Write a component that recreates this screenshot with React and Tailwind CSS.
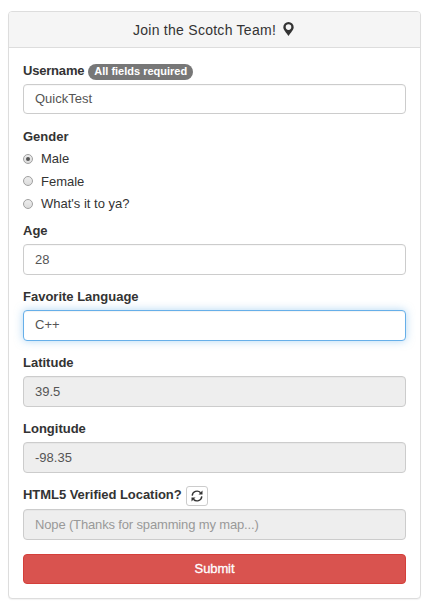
const INPUT =
  'flex w-full items-center rounded-[4px] border px-[11px] text-[13px] leading-none';

function Label({ children, className = 'h-[27px]' }) {
  return (
    <div className={`flex items-center text-[13px] font-bold leading-none text-[#333] ${className}`}>
      {children}
    </div>
  );
}

const PLAIN = 'pb-px border-[#ccc] bg-white text-[#555] shadow-[inset_0_1px_1px_rgba(0,0,0,0.03)]';
const DISABLED = 'pb-px border-[#ccc] bg-[#eee] text-[#555] shadow-[inset_0_1px_1px_rgba(0,0,0,0.03)]';
const MUTED = 'pb-px border-[#ccc] bg-[#eee] text-[#999] shadow-[inset_0_1px_1px_rgba(0,0,0,0.03)]';
const FOCUSED =
  'pb-[3px] border-[#66afe9] bg-white text-[#555] shadow-[inset_0_1px_1px_rgba(0,0,0,0.05),0_0_8px_rgba(102,175,233,0.5)]';

function Field({ label, labelClass, value, tone = PLAIN, className = 'mt-2' }) {
  return (
    <div className={className}>
      <Label className={labelClass}>{label}</Label>
      <div className={`${INPUT} h-[31px] ${tone}`}>{value}</div>
    </div>
  );
}

function Radio({ label, checked, className, textClass = 'pb-0.5' }) {
  return (
    <div className={`flex items-center text-[13px] leading-none text-[#333] ${className}`}>
      <span className="flex size-[10px] items-center justify-center rounded-full border border-[#a0a0a0] bg-linear-to-b from-[#ededed] to-[#dcdcdc]">
        {checked && <span className="size-1 rounded-full bg-[#555]" />}
      </span>
      <span className={`ml-2 ${textClass}`}>{label}</span>
    </div>
  );
}

function MapMarker() {
  return (
    <svg className="mb-0.5 ml-[7px] h-[14px] w-[11px]" viewBox="0 0 11 14" fill="#333" fillRule="evenodd">
      <path d="M5.5 0A5.200 5.200 0 0 0 .3 5.200C.3 8 3.200 10.400 5.500 14C7.800 10.400 10.700 8 10.700 5.200A5.200 5.200 0 0 0 5.500 0ZM5.500 2.300A2.800 2.800 0 1 1 5.500 7.900A2.800 2.800 0 0 1 5.500 2.300Z" />
    </svg>
  );
}

function Refresh() {
  return (
    <svg className="size-3" viewBox="0 0 12 12" fill="none" stroke="#333" strokeWidth="1.4">
      <path d="M1.200 5.600A4.800 4.800 0 0 1 9.600 2.800M10.800 6.400A4.800 4.800 0 0 1 2.400 9.200" />
      <path d="M11.500.6V4.600H7.500ZM.5 11.400V7.400H4.500Z" fill="#333" stroke="none" />
    </svg>
  );
}

export default function App() {
  return (
    <div className="h-[612px] w-[433px] overflow-hidden bg-white pl-2 pt-[11px] font-['Liberation_Sans',Arial,sans-serif]">
      <div className="h-[588px] w-[413px] rounded-[4px] border border-[#ddd] bg-white shadow-[0_1px_1px_rgba(0,0,0,0.05)]">
        <div className="flex h-9 items-center justify-center rounded-t-[3px] border-b border-[#ddd] bg-[#f5f5f5] pr-0.5 text-[14px] leading-none text-[#333]">
          <span className="tracking-[0.27px]">Join the Scotch Team!</span>
          <MapMarker />
        </div>
        <div className="px-[14px] pt-[10px]">
          <Label className="h-[26px] pb-0.5">
            <span className="tracking-[-0.2px]">Username</span>
            <span className="ml-1 mt-[3px] flex h-4 items-center rounded-full bg-[#777] px-[6px] text-[11px] text-white">
              All fields required
            </span>
          </Label>
          <div className={`${INPUT} h-[30px] ${PLAIN}`}>QuickTest</div>

          <Label className="mt-[10px] h-6">Gender</Label>
          <Radio label="Male" checked className="h-[22px]" />
          <Radio label="Female" className="h-[23px] pb-px" textClass="pb-0" />
          <Radio label="What's it to ya?" className="h-[22px]" />

          <Field label="Age" value="28" className="mt-0.5" />
          <Field label="Favorite Language" value="C++" tone={FOCUSED} />
          <Field label="Latitude" value="39.5" tone={DISABLED} />
          <Field label="Longitude" value="-98.35" tone={DISABLED} />
          <Field
            labelClass="h-7"
            label={
              <>
                <span className="pb-px tracking-[-0.04px]">HTML5 Verified Location?</span>
                <span className="ml-1 mt-px flex h-5 w-[22px] items-center justify-center rounded-[3px] border border-[#ccc] bg-white">
                  <Refresh />
                </span>
              </>
            }
            value={<span className="tracking-[-0.15px]">Nope (Thanks for spamming my map...)</span>}
            tone={MUTED}
          />
          <button className="mt-[14px] flex h-[30px] w-full items-center justify-center rounded-[4px] border border-[#d43f3a] bg-[#d9534f] pb-px text-[13px] leading-none tracking-[-0.1px] text-white [-webkit-text-stroke:0.3px_white]">
            Submit
          </button>
        </div>
      </div>
    </div>
  );
}
